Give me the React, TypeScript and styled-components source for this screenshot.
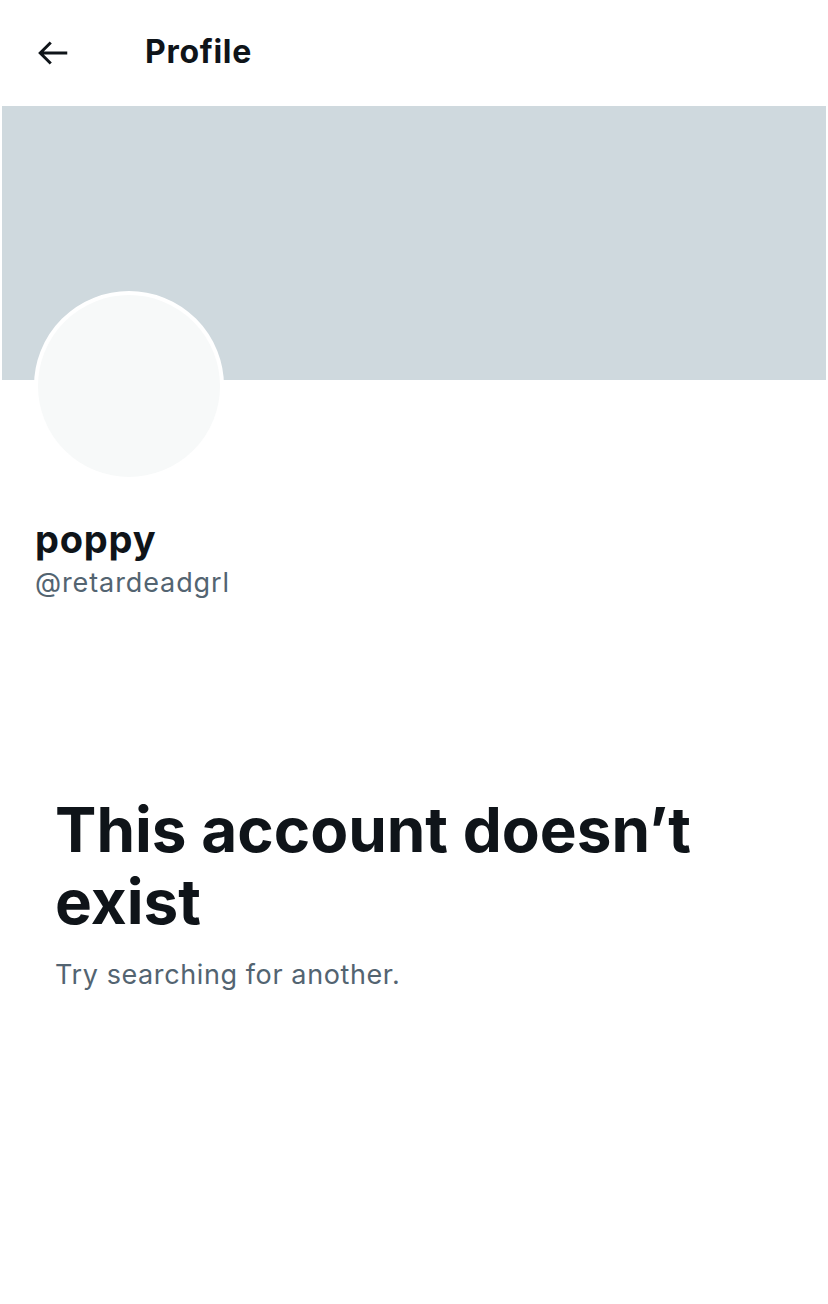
import styled, {createGlobalStyle} from 'styled-components';

const GlobalStyle = createGlobalStyle`
  html, body {
    margin: 0;
    padding: 0;
    background: #ffffff;
  }
  body {
    font-family: Inter, 'Noto Sans', 'Liberation Sans', sans-serif;
    color: #0f1419;
  }
`;

const Page = styled.div`
  width: 828px;
  min-height: 1304px;
  background: #fff;
`;

const Header = styled.header`
  height: 106px;
  display: flex;
  align-items: center;
  padding-left: 35px;
  box-sizing: border-box;
`;

const BackButton = styled.button`
  width: 36px;
  height: 36px;
  padding: 0;
  border: none;
  background: none;
  display: flex;
  align-items: center;
  justify-content: center;
  color: #0f1419;
  margin-right: 74px;
`;

const Title = styled.h1`
  margin: 0 0 4px;
  font-size: 32px;
  font-weight: 700;
  letter-spacing: 0.7px;
`;

const Banner = styled.div`
  height: 274px;
  margin: 0 2px;
  background: #cfd9de;
`;

const Avatar = styled.div`
  width: 182px;
  height: 182px;
  margin: -89px 0 0 34px;
  border-radius: 50%;
  border: 4px solid #ffffff;
  background: #f7f9f9;
  position: relative;
`;

const Names = styled.div`
  padding: 36px 35px 0;
`;

const DisplayName = styled.div`
  font-size: 38px;
  font-weight: 700;
  line-height: 44px;
  letter-spacing: 0.8px;
`;

const Handle = styled.div`
  margin-top: 4px;
  font-size: 27px;
  line-height: 36px;
  letter-spacing: 0.9px;
  color: #536471;
`;

const Empty = styled.section`
  padding: 193px 55px 0;
`;

const Heading = styled.h2`
  margin: 0;
  font-size: 62px;
  font-weight: 700;
  line-height: 72px;
`;

const Sub = styled.p`
  margin: 17px 0 0;
  font-size: 27px;
  line-height: 40px;
  letter-spacing: 0.6px;
  color: #536471;
`;

const BackArrow = () => (
  <svg width="36" height="36" viewBox="0 0 24 24" fill="none">
    <path
      d="M21.5 12H4M10.5 5L3.5 12L10.5 19"
      stroke="currentColor"
      strokeWidth="2"
      strokeLinecap="butt"
      strokeLinejoin="miter"
    />
  </svg>
);

const App = () => (
  <Page>
    <GlobalStyle />
    <Header>
      <BackButton aria-label="Back">
        <BackArrow />
      </BackButton>
      <Title>Profile</Title>
    </Header>
    <Banner />
    <Avatar />
    <Names>
      <DisplayName>poppy</DisplayName>
      <Handle>@retardeadgrl</Handle>
    </Names>
    <Empty>
      <Heading>This account doesn’t exist</Heading>
      <Sub>Try searching for another.</Sub>
    </Empty>
  </Page>
);

export default App;
